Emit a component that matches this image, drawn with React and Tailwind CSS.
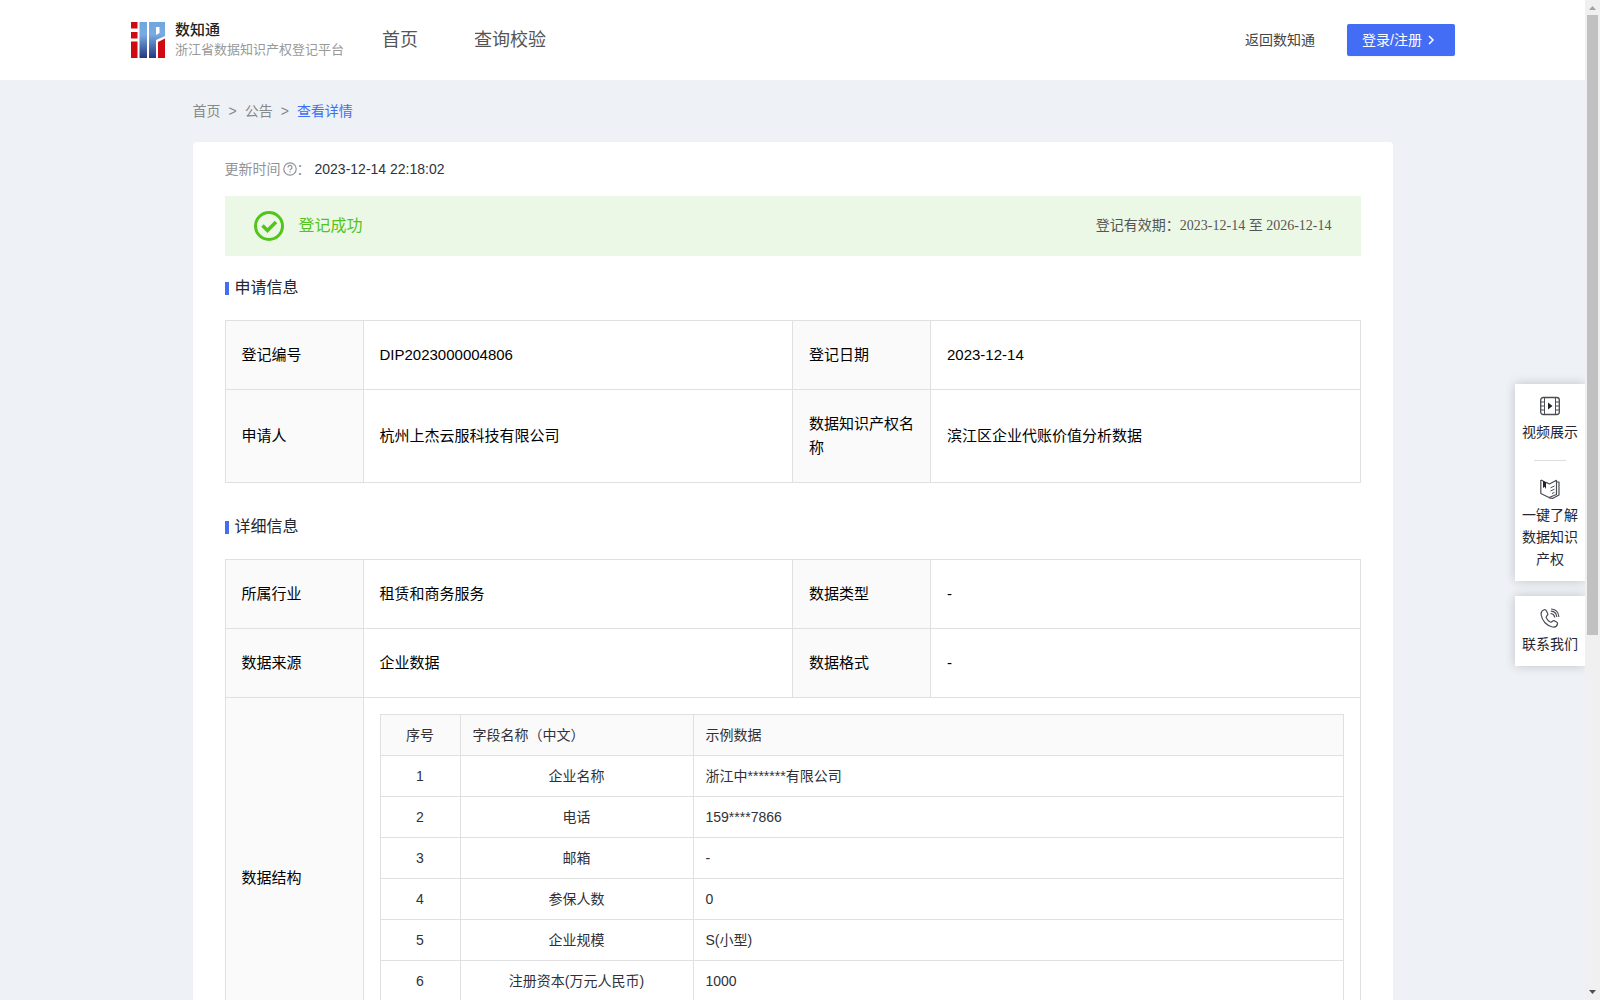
const applyRows = [
  ['登记编号', 'DIP2023000004806', '登记日期', '2023-12-14'],
  ['申请人', '杭州上杰云服科技有限公司', '数据知识产权名称', '滨江区企业代账价值分析数据'],
];

const detailRows = [
  ['所属行业', '租赁和商务服务', '数据类型', '-'],
  ['数据来源', '企业数据', '数据格式', '-'],
];

const fields = [
  { name: '企业名称', sample: '浙江中*******有限公司' },
  { name: '电话', sample: '159****7866' },
  { name: '邮箱', sample: '-' },
  { name: '参保人数', sample: '0' },
  { name: '企业规模', sample: 'S(小型)' },
  { name: '注册资本(万元人民币)', sample: '1000' },
];

function Logo() {
  return (
    <svg width="34" height="36" viewBox="0 0 34 36" aria-hidden="true">
      <defs>
        <linearGradient id="logoBlue" x1="0" y1="0" x2="0" y2="36" gradientUnits="userSpaceOnUse">
          <stop offset="0" stopColor="#6fa6e0" />
          <stop offset="0.35" stopColor="#78abe2" />
          <stop offset="1" stopColor="#25377f" />
        </linearGradient>
      </defs>
      <path d="M0 0h6.500v6.500H0zM0 10h6.500v6.500H0zM0 19.500h6.500V36H0z" fill="#cf0a10" />
      <path d="M8.500 0H16v36H8.500z" fill="url(#logoBlue)" />
      <path d="M18 0h16v14l-9 4v18h-7zM25 5v8l3.500-2V5z" fillRule="evenodd" fill="url(#logoBlue)" />
      <path d="M27 20l7-3.500V36h-7z" fill="#cf0a10" />
    </svg>
  );
}

function VideoIcon() {
  return (
    <svg width="20" height="20" viewBox="0 0 20 20" fill="none" stroke="#4b4d55" aria-hidden="true">
      <rect x="0.700" y="1.500" width="18.600" height="17" rx="2.500" strokeWidth="1.300" />
      <path d="M4.500 1.500v17M15.500 1.500v17M1 6h3.500M1 10h3.500M1 14h3.500M15.500 6H19M15.500 10H19M15.500 14H19" />
      <path d="M8 6.500v7l4.500-3.500z" fill="#22242b" stroke="none" />
    </svg>
  );
}

function BookIcon() {
  return (
    <svg width="20" height="20" viewBox="0 0 20 20" fill="none" stroke="#4b4d55" strokeLinejoin="round" aria-hidden="true">
      <path d="M0.800 1v13.500L9 18.500l7.500-3V1.300L9.500 5 6 3.400M0.800 1l2.200.9" strokeWidth="1.200" />
      <path d="M16.500 3h2.500v13l-6 3.300-4-.5" strokeWidth="1.200" />
      <path d="M3 1.500v7.500l1.500-1.200L6 10V3z" fill="#22242b" stroke="none" />
      <path d="M10.500 8.800l4-1.800M10.500 12l4-1.800M12 14.500l2.500-1.200" />
    </svg>
  );
}

function PhoneIcon() {
  return (
    <svg width="20" height="20" viewBox="0 0 20 20" fill="none" stroke="#4b4d55" strokeWidth="1.200" strokeLinecap="round" strokeLinejoin="round" aria-hidden="true">
      <path d="M4.200 1.800C2 2.500 0.800 4.500 1.200 7c.9 5.800 5.500 10.800 11.300 12 2.300.4 4.500-.8 5-3 .2-.8-.2-1.400-.9-1.900l-2-1.200c-.8-.4-1.500-.3-2 .3-.8 1-1.800 1.200-2.800.6C8.300 13 7.300 11.700 6.500 10.200c-.5-1-.2-2 .7-2.700.7-.5.8-1.200.4-2L6.500 3c-.5-1-1.300-1.500-2.300-1.200z" />
      <path d="M11 5.500c1.900.3 3.300 1.700 3.700 3.500M11.500 1c4 .4 6.800 3.200 7.300 7.500M11.300 3.200c3 .3 5 2.300 5.400 5.300" />
    </svg>
  );
}

function SectionTitle({ children }) {
  return (
    <h2 className="flex items-center gap-1.5 text-base leading-6 text-[#25262f]">
      <span className="h-[13px] w-1 bg-[#446df5]" />
      {children}
    </h2>
  );
}

function LabelCell({ children }) {
  return (
    <th scope="row" className="border border-[#e0e0e0] bg-[#fafafa] px-4 py-[22px] text-left font-normal">
      {children}
    </th>
  );
}

function InfoTable({ rows, children }) {
  return (
    <table className="mt-5 w-full table-fixed border-collapse text-[15px] leading-6 text-black">
      <colgroup>
        <col className="w-[138px]" />
        <col />
        <col className="w-[138px]" />
        <col />
      </colgroup>
      <tbody>
        {rows.map(([label, value, label2, value2]) => (
          <tr key={label}>
            <LabelCell>{label}</LabelCell>
            <td className="border border-[#e0e0e0] px-4">{value}</td>
            <LabelCell>{label2}</LabelCell>
            <td className="border border-[#e0e0e0] px-4">{value2}</td>
          </tr>
        ))}
        {children}
      </tbody>
    </table>
  );
}

function FieldTable() {
  return (
    <table className="w-full table-fixed border-collapse text-sm text-[#303139]">
      <colgroup>
        <col className="w-20" />
        <col className="w-[233px]" />
        <col />
      </colgroup>
      <thead>
        <tr className="h-[41px] bg-[#fafafa] text-left">
          <th className="border border-[#e0e0e0] text-center font-normal">序号</th>
          <th className="border border-[#e0e0e0] px-3 font-normal">字段名称（中文）</th>
          <th className="border border-[#e0e0e0] px-3 font-normal">示例数据</th>
        </tr>
      </thead>
      <tbody>
        {fields.map((field, i) => (
          <tr key={field.name} className="h-[41px]">
            <td className="border border-[#e0e0e0] text-center">{i + 1}</td>
            <td className="border border-[#e0e0e0] px-3 text-center">{field.name}</td>
            <td className="border border-[#e0e0e0] px-3">{field.sample}</td>
          </tr>
        ))}
      </tbody>
    </table>
  );
}

function Header() {
  return (
    <header className="flex h-20 items-center bg-white pr-[130px] pl-[131px]">
      <a href="#" className="flex items-center gap-2.5">
        <Logo />
        <span className="flex flex-col">
          <span className="text-[15px] leading-5 font-medium text-[#222]">数知通</span>
          <span className="text-[13px] leading-5 text-[#999]">浙江省数据知识产权登记平台</span>
        </span>
      </a>
      <nav className="ml-[38px] flex gap-14 text-lg text-[#555]">
        <a href="#">首页</a>
        <a href="#">查询校验</a>
      </nav>
      <a href="#" className="ml-auto text-sm text-[#444]">返回数知通</a>
      <button className="ml-8 flex h-8 w-[108px] items-center gap-1 rounded-xs bg-[#446df5] pl-[15px] text-sm whitespace-nowrap text-white shadow-xs">
        登录/注册
        <svg width="10" height="10" viewBox="0 0 10 10" fill="none" stroke="currentColor" strokeWidth="1.500" aria-hidden="true">
          <path d="M3 1l4 4-4 4" />
        </svg>
      </button>
    </header>
  );
}

function SideTools() {
  return (
    <aside className="absolute top-[384px] right-0 w-[70px] text-center text-sm leading-[22px] text-[#25262f]">
      <div className="flex flex-col items-center bg-white pt-3 pb-[11px] shadow-[0_0_10px_rgba(0,0,0,0.2)]">
        <a href="#" className="flex flex-col items-center gap-[5px]">
          <VideoIcon />
          视频展示
        </a>
        <hr className="mt-[17px] mb-[18px] w-8 border-[#ddd]" />
        <a href="#" className="flex w-14 flex-col items-center gap-[5px]">
          <BookIcon />
          一键了解数据知识产权
        </a>
      </div>
      <a href="#" className="mt-[15px] flex flex-col items-center gap-[5px] bg-white pt-3 pb-[11px] shadow-[0_0_10px_rgba(0,0,0,0.2)]">
        <PhoneIcon />
        联系我们
      </a>
    </aside>
  );
}

function Scrollbar() {
  return (
    <div className="flex w-[15px] shrink-0 flex-col items-center bg-[#f0f0f0]" aria-hidden="true">
      <svg width="15" height="15" viewBox="0 0 15 15"><path d="M4 10h7L7.500 6z" fill="#a3a3a3" /></svg>
      <div className="h-[62%] w-[11px] bg-[#c1c1c1]" />
      <svg className="mt-auto" width="15" height="15" viewBox="0 0 15 15"><path d="M4 5h7L7.500 9z" fill="#505050" /></svg>
    </div>
  );
}

export default function App() {
  return (
    <div className="flex h-screen overflow-hidden bg-[#eef2f6] font-['Liberation_Sans','Noto_Sans_CJK_SC',sans-serif]">
      <div className="relative min-w-0 flex-1 overflow-hidden">
        <Header />
        <main className="mx-auto w-full max-w-[1200px]">
          <nav className="flex h-[62px] items-center gap-2 text-sm text-[#888]">
            <a href="#">首页</a>
            <span>&gt;</span>
            <a href="#">公告</a>
            <span>&gt;</span>
            <a href="#" className="text-[#3f6ef5]">查看详情</a>
          </nav>

          <div className="rounded bg-white px-8 pt-4 pb-8">
            <div className="flex items-center text-sm leading-[22px] text-[#909399]">
              更新时间
              <svg className="ml-0.5" width="14" height="14" viewBox="0 0 14 14" fill="none" stroke="currentColor" strokeWidth="1.200" aria-hidden="true">
                <circle cx="7" cy="7" r="6.200" />
                <path d="M5 5.500a2 2 0 1 1 2.700 1.800c-.5.200-.7.500-.7 1M7 9.300v1.200" />
              </svg>
              ：
              <span className="ml-1 text-[#303139]">2023-12-14 22:18:02</span>
            </div>

            <div className="mt-4 flex h-15 items-center bg-[#ebf8e6] px-[29px]">
              <svg width="30" height="30" viewBox="0 0 30 30" fill="none" stroke="#52c41a" aria-hidden="true">
                <circle cx="15" cy="15" r="13.500" strokeWidth="3" />
                <path d="M8.500 14.500l5 5 8.500-8.500" strokeWidth="3.500" />
              </svg>
              <span className="ml-[15px] text-base text-[#52c41a]">登记成功</span>
              <span className="ml-auto font-['Liberation_Serif','Noto_Sans_CJK_SC',serif] text-sm text-[#555]">
                登记有效期：2023-12-14 至 2026-12-14
              </span>
            </div>

            <section className="mt-5">
              <SectionTitle>申请信息</SectionTitle>
              <InfoTable rows={applyRows} />
            </section>

            <section className="mt-8">
              <SectionTitle>详细信息</SectionTitle>
              <InfoTable rows={detailRows}>
                <tr className="h-[361px]">
                  <LabelCell>数据结构</LabelCell>
                  <td colSpan={3} className="border border-[#e0e0e0] p-4 align-top">
                    <FieldTable />
                  </td>
                </tr>
              </InfoTable>
            </section>
          </div>
        </main>
        <SideTools />
      </div>
      <Scrollbar />
    </div>
  );
}
